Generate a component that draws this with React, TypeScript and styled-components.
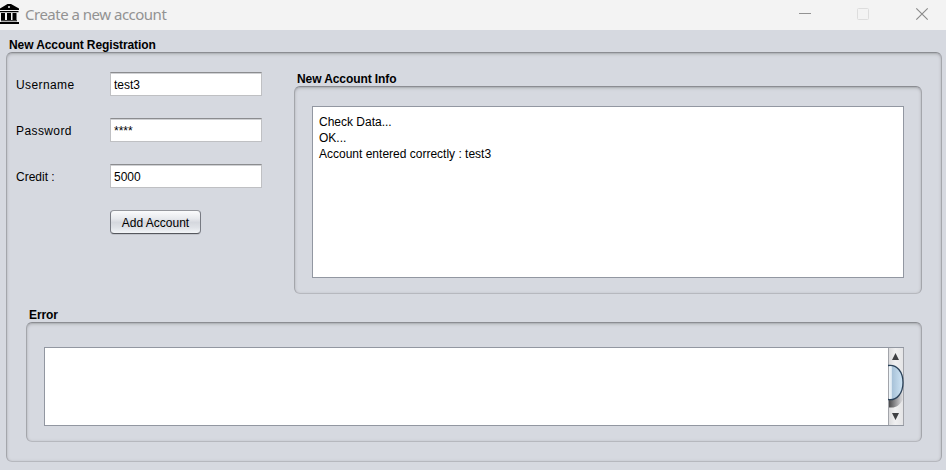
import React from "react";
import styled, { createGlobalStyle } from "styled-components";

const GlobalStyle = createGlobalStyle`
  * { box-sizing: border-box; }
  body {
    margin: 0;
    overflow: hidden;
    background: #d6d9e0;
    color: #000;
    font: 12px/16px "Liberation Sans", Arial, sans-serif;
  }
`;

const Window = styled.div`
  width: 946px;
  height: 470px;
  display: flex;
  flex-direction: column;
  background: #d6d9e0;
`;

const TitleBar = styled.header`
  height: 30px;
  flex: none;
  display: flex;
  align-items: flex-start;
  background: #f3f3f3;
`;

const WindowTitle = styled.h1`
  margin: 0 auto 0 6px;
  font: 400 15px/29px "Noto Sans", "Open Sans", sans-serif;
  letter-spacing: -0.5px;
  color: #929292;
  white-space: nowrap;
`;

const WindowControls = styled.div`
  display: flex;
  width: 160px;
  height: 30px;
`;

const Content = styled.main`
  flex: 1;
  padding: 7px 4px 8px 6px;
  display: flex;
`;

const Group = styled.section<{ $width: number; $height: number }>`
  width: ${(p) => p.$width}px;
  height: ${(p) => p.$height}px;
  display: flex;
  flex-direction: column;
`;

const Legend = styled.h2`
  margin: 0;
  height: 15px;
  padding-left: 3px;
  font: bold 12px/16px "Liberation Sans", Arial, sans-serif;
  letter-spacing: -0.09px;
  white-space: nowrap;
`;

const Frame = styled.div<{ $padding: string }>`
  flex: 1;
  padding: ${(p) => p.$padding};
  border: 1px solid #b6b8be;
  border-top-color: #8b8d92;
  border-left-color: #a4a6ab;
  border-right-color: #a4a6ab;
  border-radius: 6px;
  box-shadow: inset 0 1px 1px #b1b3b8, inset 0 2px 3px #c2c4ca, inset 0 0 3px #c4c6cb;
`;

const TopRow = styled.div`
  display: flex;
  height: 223px;
`;

const Form = styled.form`
  width: 278px;
  padding-top: 1px;
  display: flex;
  flex-direction: column;
  gap: 22px;
`;

const Field = styled.label`
  display: grid;
  grid-template-columns: 94px 152px;
  height: 24px;
  line-height: 24px;
`;

const LabelText = styled.span<{ $spacing?: number }>`
  padding-top: 1px;
  letter-spacing: ${(p) => p.$spacing ?? 0}px;
`;

const Input = styled.input`
  width: 152px;
  height: 24px;
  margin: 0;
  padding: 2px 3px 0;
  border: 1px solid #bfc0c3;
  border-top-color: #8b8c8f;
  border-radius: 0;
  outline: none;
  background: #fff;
  box-shadow: inset 0 1px 0 #d0d1d4;
  color: #000;
  font: 12px "Liberation Sans", Arial, sans-serif;
`;

const AddButton = styled.button`
  width: 91px;
  height: 24px;
  margin: 0 0 0 94px;
  padding: 1px 0 0;
  border: 1px solid #777a82;
  border-top-color: #94969c;
  border-bottom-color: #55575d;
  border-radius: 4px;
  background: linear-gradient(#fafbfc, #e7e9ed 35%, #d5d8de 52%, #dfe2e7 75%, #f3f5f8);
  box-shadow: 0 1px 0 #c1c4cb;
  color: #000;
  font: 12px "Liberation Sans", Arial, sans-serif;
  white-space: nowrap;
`;

const InfoText = styled.div`
  height: 172px;
  padding: 7px 6px;
  border: 1px solid #9297a1;
  background: #fff;
`;

const Line = styled.p`
  margin: 0;
  white-space: nowrap;
`;

const ErrorRow = styled.div`
  padding: 13px 0 0 10px;
`;

const ErrorBox = styled.div`
  height: 79px;
  display: flex;
  justify-content: flex-end;
  border: 1px solid #9297a1;
  border-right: 0;
  background: #fff;
`;

const BankIcon = () => (
  <svg width="19" height="30" viewBox="0 0 19 30" aria-hidden="true">
    <path d="M0 10V8.5L7.5 4h3.5L19 8.5V10z M0 11h18.5v1.3H0z M1 13h4v7H1z M7 13h4v7H7z M12.5 13h4v7h-4z M1 20.3h16v1H1z M0 22h19v2H0z" />
    <circle cx="9" cy="7" r="1" fill="#f3f3f3" />
  </svg>
);

const ControlIcons = () => (
  <svg width="160" height="30" viewBox="0 0 160 30" fill="none" aria-hidden="true">
    <path d="M13 13.5h12" stroke="#929292" />
    <rect x="71.5" y="8.5" width="11" height="11" rx="1" stroke="#dddddd" />
    <path d="M130.3 8.3l11.4 11.4M141.7 8.3l-11.4 11.4" stroke="#8a8a8a" strokeWidth="1.15" />
  </svg>
);

const ScrollBar = () => (
  <svg width="16" height="77" viewBox="0 0 16 77" aria-hidden="true">
    <defs>
      <linearGradient id="track">
        <stop stopColor="#d9d9db" />
        <stop offset=".45" stopColor="#f0f0f1" />
        <stop offset="1" stopColor="#e3e3e5" />
      </linearGradient>
      <linearGradient id="thumb">
        <stop stopColor="#f0f6fa" />
        <stop offset=".17" stopColor="#e0ebf3" />
        <stop offset=".25" stopColor="#a9c3d9" />
        <stop offset="1" stopColor="#cfe5f5" />
      </linearGradient>
      <linearGradient id="shade" x1="0" y1="0" x2="1" y2="0">
        <stop offset="0" stopColor="#4b4b4d" />
        <stop offset=".9" stopColor="#d0d0d3" />
      </linearGradient>
    </defs>
    <path d="M0 0h16v77H0z" fill="url(#track)" />
    <path d="M.5 0v77M15.5 0v77" stroke="#a2a4aa" />
    <path d="M1 49L14.5 43V52C12 57 8 59.5 4 59.5H1z" fill="url(#shade)" />
    <path d="M1 17.5C9 16 15 24 15 34.5S9 53 1 51.5z" fill="url(#thumb)" />
    <path d="M0 17.5C9 16 15 24 15 34.5S9 53 0 51.5" fill="none" stroke="#2b425a" strokeWidth="1.3" />
    <path d="M7.5 5l3.5 7h-7zM7.5 72l3.5-7h-7z" fill="#3f4043" />
  </svg>
);

export default function App() {
  return (
    <>
      <GlobalStyle />
      <Window>
        <TitleBar>
          <BankIcon />
          <WindowTitle>Create a new account</WindowTitle>
          <WindowControls><ControlIcons /></WindowControls>
        </TitleBar>
        <Content>
          <Group $width={936} $height={425}>
            <Legend>New Account Registration</Legend>
            <Frame $padding="18px 19px 19px 9px">
              <TopRow>
                <Form onSubmit={(e) => e.preventDefault()}>
                  <Field><LabelText $spacing={0.4}>Username</LabelText><Input defaultValue="test3" /></Field>
                  <Field><LabelText $spacing={0.4}>Password</LabelText><Input defaultValue="****" /></Field>
                  <Field><LabelText>Credit :</LabelText><Input defaultValue="5000" /></Field>
                  <AddButton>Add Account</AddButton>
                </Form>
                <Group $width={628} $height={223}>
                  <Legend>New Account Info</Legend>
                  <Frame $padding="19px 17px 15px">
                    <InfoText>
                      <Line>Check Data...</Line>
                      <Line>OK...</Line>
                      <Line>Account entered correctly : test3</Line>
                    </InfoText>
                  </Frame>
                </Group>
              </TopRow>
              <ErrorRow>
                <Group $width={896} $height={135}>
                  <Legend>Error</Legend>
                  <Frame $padding="24px 17px 15px">
                    <ErrorBox><ScrollBar /></ErrorBox>
                  </Frame>
                </Group>
              </ErrorRow>
            </Frame>
          </Group>
        </Content>
      </Window>
    </>
  );
}
